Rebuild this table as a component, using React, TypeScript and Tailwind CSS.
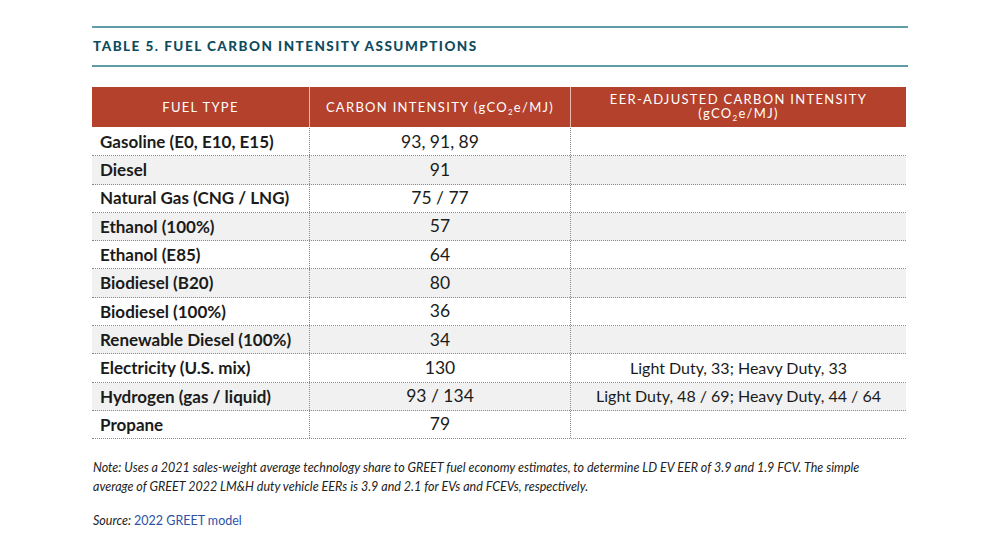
import React from "react";

const rows = [
  { fuel: "Gasoline (E0, E10, E15)", ci: "93, 91, 89", eer: "" },
  { fuel: "Diesel", ci: "91", eer: "" },
  { fuel: "Natural Gas (CNG / LNG)", ci: "75 / 77", eer: "" },
  { fuel: "Ethanol (100%)", ci: "57", eer: "" },
  { fuel: "Ethanol (E85)", ci: "64", eer: "" },
  { fuel: "Biodiesel (B20)", ci: "80", eer: "" },
  { fuel: "Biodiesel (100%)", ci: "36", eer: "" },
  { fuel: "Renewable Diesel (100%)", ci: "34", eer: "" },
  { fuel: "Electricity (U.S. mix)", ci: "130", eer: "Light Duty, 33; Heavy Duty, 33" },
  { fuel: "Hydrogen (gas / liquid)", ci: "93 / 134", eer: "Light Duty, 48 / 69; Heavy Duty, 44 / 64" },
  { fuel: "Propane", ci: "79", eer: "" },
];

function Unit() {
  return (
    <span>
      (gCO<sub className="text-[8px] align-baseline relative top-[3px]">2</sub>e/MJ)
    </span>
  );
}

export default function App() {
  return (
    <div className="w-[1000px] h-[549px] bg-white overflow-hidden font-['Lato',sans-serif]">
      <div className="w-[816px] ml-[92px] pt-[26px]">
        <div className="h-[2px] bg-[#5f9ca6]" />
        <div className="h-[37px] flex items-center pl-[1px] text-[13.5px] font-black tracking-[0.11em] text-[#0f4b5e]">
          TABLE 5. FUEL CARBON INTENSITY ASSUMPTIONS
        </div>
        <div className="h-[2px] bg-[#5f9ca6]" />

        <div className="mt-[20px] w-[814px]">
          {/* header */}
          <div className="grid grid-cols-[217px_1px_260px_1px_335px] h-[40px] bg-[#b3412b] text-white text-[13px] tracking-[0.1em] leading-[14px]">
            <div className="flex items-center justify-center">FUEL TYPE</div>
            <div className="bg-[#e9b8ac]" />
            <div className="flex items-center justify-center">
              <span>CARBON INTENSITY <Unit /></span>
            </div>
            <div className="bg-[#e9b8ac]" />
            <div className="flex flex-col items-center justify-center pb-[3px]">
              <span>EER-ADJUSTED CARBON INTENSITY</span>
              <Unit />
            </div>
          </div>
          <div className="h-[1px]" />
          {/* body */}
          {rows.map((r, i) => (
            <div
              key={r.fuel}
              className={`grid grid-cols-[217px_261px_336px] h-[28.3px] border-b border-dotted border-[#8a8a8a] text-[#1b1b1b] ${
                i % 2 === 1 ? "bg-[#f1f1f1]" : "bg-white"
              }`}
            >
              <div className="flex items-center pl-[8px] font-bold text-[17px]">{r.fuel}</div>
              <div className="flex items-center justify-center border-l border-dotted border-[#8a8a8a] text-[17.5px]">{r.ci}</div>
              <div className="flex items-center justify-center border-l border-dotted border-[#8a8a8a] text-[16px]">{r.eer}</div>
            </div>
          ))}
        </div>

        <div className="mt-[19px] text-[12.5px] italic text-[#222] leading-[19px] pl-[1px]">
          <p>
            Note: Uses a 2021 sales-weight average technology share to GREET fuel economy estimates, to determine LD EV EER of 3.9 and 1.9 FCV. The simple
          </p>
          <p>average of GREET 2022 LM&amp;H duty vehicle EERs is 3.9 and 2.1 for EVs and FCEVs, respectively.</p>
          <p className="mt-[15px]">
            Source: <span className="not-italic text-[#2d52a5]">2022 GREET model</span>
          </p>
        </div>
      </div>
    </div>
  );
}
